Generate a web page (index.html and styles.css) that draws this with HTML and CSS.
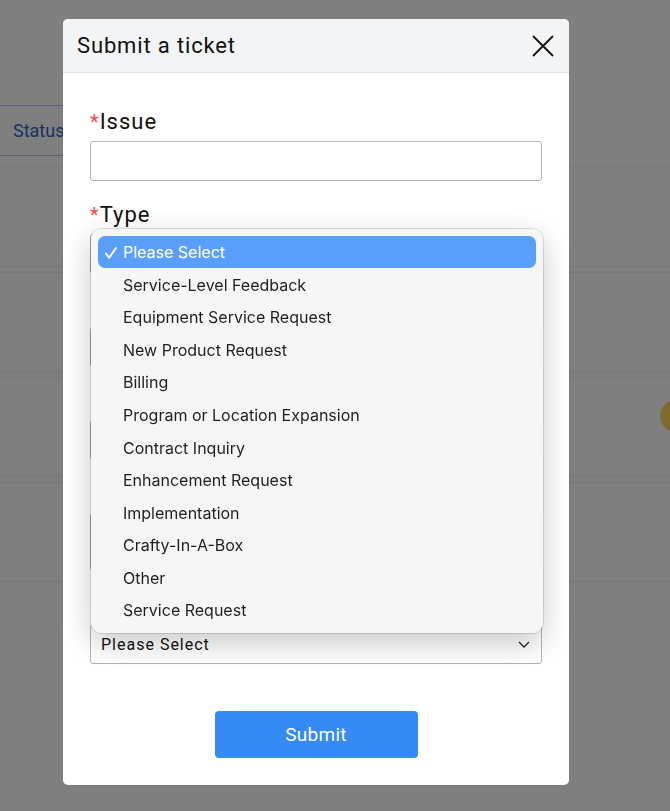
FILE: index.html
```
<!DOCTYPE html>
<html>
<head>
<meta charset="utf-8">
<link rel="stylesheet" href="styles.css">
</head>
<body>
<div class="page">
  <div class="toolbar">
    <div class="status-tab">Status</div>
  </div>
  <div class="rows">
    <div class="row"></div>
    <div class="row"></div>
    <div class="row"><span class="dot"></span></div>
    <div class="row"></div>
  </div>
</div>
<div class="overlay"></div>
<div class="modal">
  <div class="modal-header">
    <div class="modal-title">Submit a ticket</div>
    <svg class="close" width="22" height="22" viewBox="0 0 22 22"><path d="M1 1L21 21M21 1L1 21" stroke="#111" stroke-width="1.8" fill="none"/></svg>
  </div>
  <div class="modal-body">
    <div class="group">
      <label class="label"><span class="req">*</span>Issue</label>
      <div class="input"></div>
    </div>
    <div class="group">
      <label class="label"><span class="req">*</span>Type</label>
      <div class="input"></div>
    </div>
    <div class="group">
      <div class="label-space"></div>
      <div class="input"></div>
    </div>
    <div class="group">
      <div class="label-space"></div>
      <div class="input"></div>
    </div>
    <div class="group">
      <div class="label-space"></div>
      <div class="input tall"></div>
    </div>
    <div class="group">
      <div class="label-space"></div>
      <div class="input select">Please Select<svg class="chev" width="12" height="7" viewBox="0 0 12 7"><path d="M1 1L6 6L11 1" stroke="#222" stroke-width="1.3" fill="none"/></svg></div>
    </div>
    <div class="actions">
      <button class="submit">Submit</button>
    </div>
  </div>
  <div class="menu">
    <div class="item selected"><svg class="check" width="14" height="14" viewBox="0 0 14 14"><path d="M2 7.5L5.2 11.8L12 2" stroke="#fff" stroke-width="2" fill="none" stroke-linecap="round" stroke-linejoin="round"/></svg>Please Select</div>
    <div class="item">Service-Level Feedback</div>
    <div class="item">Equipment Service Request</div>
    <div class="item">New Product Request</div>
    <div class="item">Billing</div>
    <div class="item">Program or Location Expansion</div>
    <div class="item">Contract Inquiry</div>
    <div class="item">Enhancement Request</div>
    <div class="item">Implementation</div>
    <div class="item">Crafty-In-A-Box</div>
    <div class="item">Other</div>
    <div class="item">Service Request</div>
  </div>
</div>
</body>
</html>
```
FILE: styles.css
```
html, body {
  margin: 0;
  padding: 0;
  height: 100%;
  overflow: hidden;
}
body {
  background: #ffffff;
  font-family: Roboto, "Liberation Sans", sans-serif;
  position: relative;
}
.page {
  padding-top: 105px;
}
.toolbar {
  height: 62px;
  border-bottom: 1px solid #eeeeee;
  box-sizing: border-box;
}
.status-tab {
  width: 110px;
  height: 51px;
  border: 1px solid #b6c6e6;
  border-left: none;
  border-radius: 0 4px 4px 0;
  color: #2f64c8;
  font-size: 18px;
  line-height: 49px;
  padding-left: 13px;
  box-sizing: border-box;
}
.row {
  height: 100px;
  border-bottom: 1px solid #eeeeee;
  box-sizing: border-box;
  display: flex;
  align-items: flex-start;
  justify-content: flex-end;
}
.row + .row {
  margin-top: 5px;
  border-top: 1px solid #eeeeee;
}
.dot {
  width: 34px;
  height: 34px;
  border-radius: 50%;
  background: #fdd35f;
  margin-right: -24px;
  margin-top: 21px;
}
.overlay {
  position: absolute;
  inset: 0;
  background: rgba(0, 0, 0, 0.5);
}
.modal {
  position: absolute;
  left: 63px;
  top: 19px;
  width: 506px;
  height: 766px;
  background: #fff;
  border-radius: 5px;
}
.modal-header {
  height: 53px;
  background: #f3f4f6;
  border-bottom: 1px solid #dcdfe4;
  border-radius: 5px 5px 0 0;
  display: flex;
  align-items: center;
  justify-content: space-between;
  padding: 0 15px 0 14px;
}
.modal-title {
  font-size: 22px;
  letter-spacing: 0.85px;
  color: #111;
}
.close {
  display: block;
}
.modal-body {
  padding: 36px 27px 0 27px;
}
.group {
  margin-bottom: 21px;
}
.label {
  display: block;
  font-size: 22px;
  line-height: 26px;
  letter-spacing: 1px;
  color: #111;
  margin-bottom: 6px;
}
.label-space {
  height: 26px;
  margin-bottom: 6px;
}
.req {
  color: #f0474d;
  font-size: 20px;
}
.input {
  height: 40px;
  border: 1px solid #b3b3b3;
  border-radius: 3px;
  box-sizing: border-box;
  background: #fff;
}
.input.tall {
  height: 58px;
}
.select {
  font-size: 16px;
  letter-spacing: 1px;
  color: #111;
  padding: 0 11px 0 10px;
  display: flex;
  align-items: center;
  justify-content: space-between;
}
.chev {
  display: block;
}
.actions {
  display: flex;
  justify-content: center;
  padding-top: 26px;
}
.submit {
  width: 203px;
  height: 47px;
  border: none;
  border-radius: 4px;
  background: #368af4;
  color: #fff;
  font-family: Roboto, "Liberation Sans", sans-serif;
  font-size: 19px;
  letter-spacing: 0.3px;
}
.menu {
  position: absolute;
  left: 28px;
  top: 210px;
  width: 452px;
  height: 404px;
  box-sizing: border-box;
  padding: 7px;
  border-radius: 11px;
  background: rgba(246, 246, 247, 0.97);
  backdrop-filter: blur(16px);
  box-shadow: 0 0 0 1px rgba(0, 0, 0, 0.12), 0 10px 30px rgba(0, 0, 0, 0.22);
  font-family: Inter, "Noto Sans", sans-serif;
}
.item {
  height: 32.55px;
  display: flex;
  align-items: center;
  padding-left: 25px;
  font-size: 16px;
  color: #1f1f1f;
  position: relative;
}
.item.selected {
  height: 32px;
  margin-bottom: 0.55px;
  background: #5a9ffc;
  color: #fff;
  border-radius: 7px;
}
.check {
  position: absolute;
  left: 6px;
  top: 10px;
}
```
